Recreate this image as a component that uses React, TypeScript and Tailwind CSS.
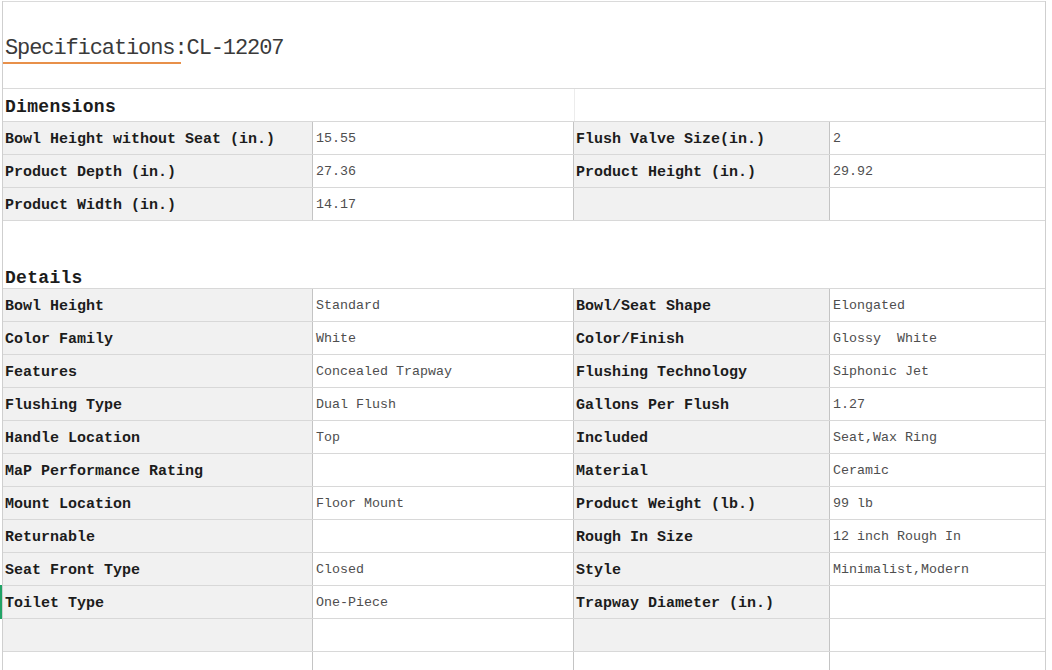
import React from 'react';

type Row = [string, string, string, string];

const DIMENSIONS: Row[] = [
  ['Bowl Height without Seat (in.)', '15.55', 'Flush Valve Size(in.)', '2'],
  ['Product Depth (in.)', '27.36', 'Product Height (in.)', '29.92'],
  ['Product Width (in.)', '14.17', '', ''],
];

const DETAILS: Row[] = [
  ['Bowl Height', 'Standard', 'Bowl/Seat Shape', 'Elongated'],
  ['Color Family', 'White', 'Color/Finish', 'Glossy  White'],
  ['Features', 'Concealed Trapway', 'Flushing Technology', 'Siphonic Jet'],
  ['Flushing Type', 'Dual Flush', 'Gallons Per Flush', '1.27'],
  ['Handle Location', 'Top', 'Included', 'Seat,Wax Ring'],
  ['MaP Performance Rating', '', 'Material', 'Ceramic'],
  ['Mount Location', 'Floor Mount', 'Product Weight (lb.)', '99 lb'],
  ['Returnable', '', 'Rough In Size', '12 inch Rough In'],
  ['Seat Front Type', 'Closed', 'Style', 'Minimalist,Modern'],
  ['Toilet Type', 'One-Piece', 'Trapway Diameter (in.)', ''],
];

const mono = "font-['Liberation_Mono','DejaVu_Sans_Mono',monospace]";

const Label = ({ text, w }: { text: string; w: string }) => (
  <div className={`${w} flex items-center pt-[4px] pl-[2px] bg-[#f1f1f1] border-r border-[#c4c4c4] text-[15px] font-bold text-[#1c1c1c] whitespace-pre overflow-hidden`}>
    {text}
  </div>
);

const Value = ({ text, w, last }: { text: string; w: string; last?: boolean }) => (
  <div className={`${w} flex items-center pt-[2px] pl-[3px] bg-white ${last ? '' : 'border-r border-[#c4c4c4]'} text-[13.33px] text-[#4e4e4e] whitespace-pre overflow-hidden`}>
    {text}
  </div>
);

const DataRow = ({ row, marker, plain }: { row: Row; marker?: boolean; plain?: boolean }) => (
  <div className="relative flex h-[33px] border-b border-[#d8d8d8]">
    {marker && <div className="absolute left-[-3px] top-[-1px] h-[34px] w-[2px] bg-[#21a366]" />}
    {plain ? (
      <>
        <Value text={row[0]} w="w-[310px]" />
        <Value text={row[1]} w="w-[261px]" />
        <Value text={row[2]} w="w-[256px]" />
        <Value text={row[3]} w="w-[215px]" last />
      </>
    ) : (
      <>
        <Label text={row[0]} w="w-[310px]" />
        <Value text={row[1]} w="w-[261px]" />
        <Label text={row[2]} w="w-[256px]" />
        <Value text={row[3]} w="w-[215px]" last />
      </>
    )}
  </div>
);

export default function App() {
  return (
    <div className={`w-[1052px] h-[670px] bg-white overflow-hidden ${mono}`}>
      <div className="ml-[2px] w-[1044px] border-l border-r border-[#cfcfcf]">
        {/* Title */}
        <div className="h-[88px] mt-[1px] border-t border-b border-[#dadada] pt-[34px]">
          <div className="pl-[2px] text-[22px] leading-[26px] tracking-[-1.1px] text-[#3a3a3a] whitespace-pre">
            Specifications:CL-12207
          </div>
          <div className="w-[178px] h-[2px] bg-[#e8904a]" />
        </div>

        {/* Dimensions */}
        <div className="h-[33px] border-b border-[#d8d8d8] flex">
          <div className="w-[571px] pt-[8px] pl-[2px] text-[18px] leading-[20px] font-bold tracking-[0.3px] text-[#1c1c1c]">
            Dimensions
          </div>
          <div className="flex-1 border-l border-[#ececec]" />
        </div>
        {DIMENSIONS.map((r, i) => (
          <DataRow key={i} row={r} />
        ))}

        {/* Details */}
        <div className="h-[68px] border-b border-[#d8d8d8] pt-[47px] pl-[2px] text-[18px] leading-[20px] font-bold tracking-[0.3px] text-[#1c1c1c]">
          Details
        </div>
        {DETAILS.map((r, i) => (
          <DataRow key={i} row={r} marker={r[0] === 'Toilet Type'} />
        ))}
        <DataRow row={['', '', '', '']} />
        <DataRow row={['', '', '', '']} plain />
      </div>
    </div>
  );
}
